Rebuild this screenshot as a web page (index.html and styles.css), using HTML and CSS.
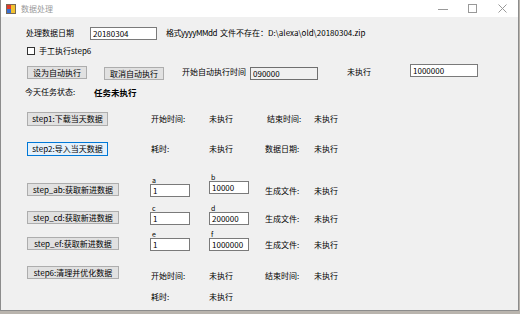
FILE: index.html
```html
<!DOCTYPE html>
<html lang="zh-CN">

<head>
    <meta charset="UTF-8">
    <title>数据处理</title>
    <link rel="stylesheet" href="styles.css">
</head>

<body>
    <div class="window">
        <div class="titlebar">
            <svg class="app-icon" width="10" height="10" viewBox="0 0 10 10">
                <rect x="0" y="0" width="10" height="10" fill="#7a6a55"/>
                <rect x="1" y="1" width="4" height="4" fill="#e03a2a"/>
                <rect x="5" y="1" width="4" height="4" fill="#f2c230"/>
                <rect x="1" y="5" width="4" height="4" fill="#3a6fd0"/>
                <rect x="5" y="5" width="4" height="4" fill="#f2c230"/>
            </svg>
            <span class="title">数据处理</span>
            <div class="controls">
                <svg width="10" height="10" viewBox="0 0 10 10"><path d="M0 5.5h10" stroke="#999" stroke-width="1"/></svg>
                <svg width="10" height="10" viewBox="0 0 10 10"><rect x="0.5" y="0.5" width="8" height="8" fill="none" stroke="#999"/></svg>
                <svg width="10" height="10" viewBox="0 0 10 10"><path d="M0.5 0.5l8 8M8.5 0.5l-8 8" stroke="#999"/></svg>
            </div>
        </div>

        <div class="form">
            <!-- 日期 -->
            <div class="row r1">
                <span class="w64">处理数据日期</span>
                <input class="txt date" type="text" value="20180304">
                <span class="fmt">格式yyyyMMdd</span>
                <span>文件不存在：D:\alexa\old\20180304.zip</span>
            </div>

            <div class="row r2">
                <span class="chk"></span>
                <span>手工执行step6</span>
            </div>

            <!-- 自动执行 -->
            <div class="row r3">
                <button class="btn auto1">设为自动执行</button>
                <button class="btn auto2">取消自动执行</button>
                <span class="w68">开始自动执行时间</span>
                <input class="txt ro t090" type="text" value="090000" readonly>
                <span class="w63">未执行</span>
                <input class="txt tmax" type="text" value="1000000">
            </div>

            <div class="row r4">
                <span class="w69">今天任务状态:</span>
                <b class="state">任务未执行</b>
            </div>

            <!-- 步骤 -->
            <div class="steps">
                <div class="grow r5">
                    <button class="btn b81">step1:下载当天数据</button>
                    <span class="c2">开始时间:</span>
                    <span>未执行</span>
                    <span class="c4">结束时间:</span>
                    <span>未执行</span>
                </div>

                <div class="grow r6">
                    <button class="btn b81 focus">step2:导入当天数据</button>
                    <span class="c2">耗时:</span>
                    <span>未执行</span>
                    <span>数据日期:</span>
                    <span>未执行</span>
                </div>

                <div class="grow pair r7">
                    <button class="btn b92">step_ab:获取新进数据</button>
                    <label class="fld"><i>a</i><input class="txt num" type="text" value="1"></label>
                    <label class="fld up"><i>b</i><input class="txt num" type="text" value="10000"></label>
                    <span>生成文件:</span>
                    <span>未执行</span>
                </div>

                <div class="grow pair r8">
                    <button class="btn b92">step_cd:获取新进数据</button>
                    <label class="fld"><i>c</i><input class="txt num" type="text" value="1"></label>
                    <label class="fld"><i>d</i><input class="txt num" type="text" value="200000"></label>
                    <span>生成文件:</span>
                    <span>未执行</span>
                </div>

                <div class="grow pair r9">
                    <button class="btn b92">step_ef:获取新进数据</button>
                    <label class="fld"><i>e</i><input class="txt num" type="text" value="1"></label>
                    <label class="fld"><i>f</i><input class="txt num" type="text" value="1000000"></label>
                    <span>生成文件:</span>
                    <span>未执行</span>
                </div>

                <div class="grow r10">
                    <button class="btn b92">step6:清理并优化数据</button>
                    <span class="c2 low">开始时间:</span>
                    <span class="low">未执行</span>
                    <span class="low">结束时间:</span>
                    <span class="low">未执行</span>
                </div>

                <div class="grow r11">
                    <span></span>
                    <span class="c2">耗时:</span>
                    <span>未执行</span>
                </div>
            </div>
        </div>
    </div>
</body>

</html>
```

FILE: styles.css
```css
* {
    margin: 0;
    padding: 0;
    box-sizing: border-box;
}

body {
    width: 520px;
    height: 314px;
    overflow: hidden;
    background: #b9b4ad;
    font-family: "Noto Sans CJK SC", sans-serif;
    font-size: 8px;
    line-height: 10px;
    color: #000;
}

.window {
    width: 519px;
    height: 311px;
    background: #f0f0f0;
    border: 1px solid #8c8c8c;
    border-top: none;
}

/* 标题栏 */
.titlebar {
    height: 17px;
    background: #fff;
    display: flex;
    align-items: center;
    padding-left: 5px;
}

.title {
    margin-left: 5px;
    color: #9a9a9a;
    font-size: 8px;
}

.controls {
    margin-left: auto;
    display: flex;
    gap: 20px;
    padding-right: 10px;
}

/* 表单 */
.form {
    padding-left: 25px;
}

.row {
    display: flex;
    align-items: center;
    white-space: nowrap;
}

.row > * {
    flex: none;
}

.r1 { margin-top: 9px; height: 14px; }
.r2 { margin-top: 5px; height: 12px; padding-left: 1px; }
.r3 { margin-top: 6px; height: 17px; align-items: flex-start; padding-left: 1px; }
.r4 { margin-top: 6px; height: 12px; padding-left: 0; margin-left: -1px; }

.w64 { width: 64px; }
.w68 { width: 68px; margin-top: 4px; }
.w63 { width: 63px; margin-left: 29px; margin-top: 4px; }
.w69 { width: 69px; }

.fmt {
    margin-left: 9px;
    width: 54px;
    letter-spacing: -0.45px;
}

.txt {
    height: 13px;
    border: 1px solid #7a7a7a;
    background: #fff;
    font-family: "Noto Sans CJK SC", sans-serif;
    font-size: 8px;
    padding: 0 2px;
    outline: none;
}

.date { width: 67px; }
.ro { background: #f0f0f0; border-color: #6f6f6f; }
.t090 { width: 68px; margin-top: 4px; }
.tmax { width: 68px; margin-top: 1px; }

.chk {
    width: 8px;
    height: 8px;
    border: 1px solid #333;
    background: #fff;
    margin-right: 4px;
}

.btn {
    height: 13px;
    background: #e1e1e1;
    border: 1px solid #adadad;
    font-family: "Noto Sans CJK SC", sans-serif;
    font-size: 8px;
    line-height: 11px;
    color: #000;
    padding: 0;
    white-space: nowrap;
}

.auto1 { width: 60px; margin-top: 3px; margin-right: 17px; }
.auto2 { width: 60px; margin-top: 4px; margin-right: 18px; }

.state { font-weight: bold; font-size: 8.5px; }

/* 步骤区 */
.steps {
    margin-left: 1px;
}

.grow {
    display: grid;
    grid-template-columns: 123px 59px 56px 49px auto;
    align-items: center;
    white-space: nowrap;
}

.r5 { margin-top: 13px; height: 15px; }
.r6 { margin-top: 15px; height: 15px; }
.r7 { margin-top: 17px; height: 22px; }
.r8 { margin-top: 8px; height: 22px; }
.r9 { margin-top: 5px; height: 21px; }
.r10 { margin-top: 13px; height: 16px; }
.r11 { margin-top: 11px; height: 12px; }

.b81 { width: 81px; height: 14px; }
.b92 { width: 92px; }

.focus {
    border-color: #0078d7;
    background: #e5f1fb;
}

.c2 { padding-left: 1px; }
.c4 { padding-left: 2px; }

.pair { align-items: end; }
.pair .btn { margin-bottom: 1px; }
.pair > span { margin-bottom: 1px; }

.fld {
    display: flex;
    flex-direction: column;
}

.fld i {
    font-style: normal;
    font-size: 7px;
    line-height: 8px;
    padding-left: 2px;
}

.up { margin-bottom: 3px; }

.num { width: 40px; }

.low { margin-top: 7px; }
```
